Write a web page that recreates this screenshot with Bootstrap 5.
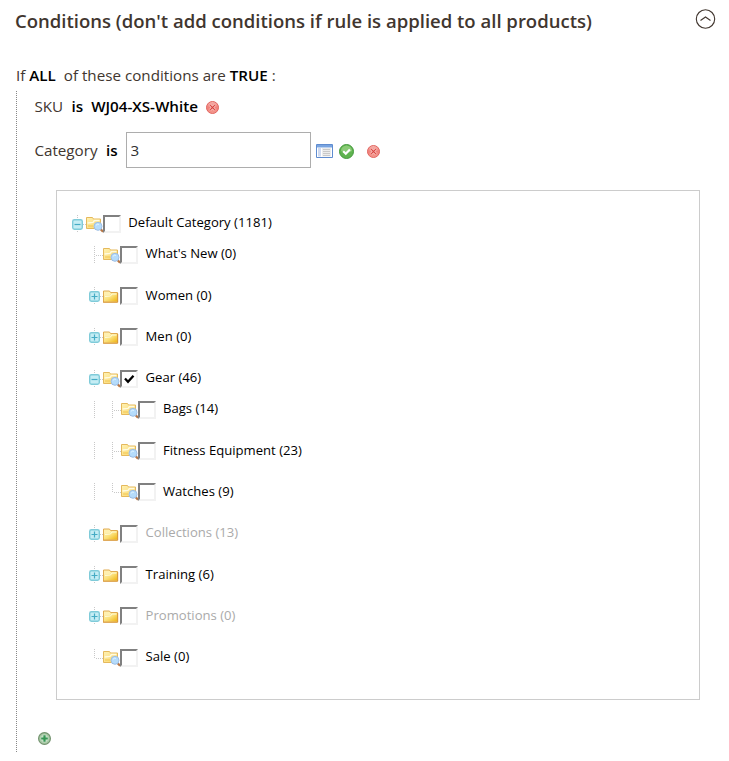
<!DOCTYPE html>
<html lang="en">
<head>
<meta charset="utf-8">
<meta name="viewport" content="width=device-width, initial-scale=1">
<title>Conditions</title>
<link href="https://cdn.jsdelivr.net/npm/bootstrap@5.3.0/dist/css/bootstrap.min.css" rel="stylesheet">
<style>
body{font-family:"Open Sans","Noto Sans",sans-serif;font-size:15.2px;line-height:20px;color:#41362f;background:#fff}
.rule-page{width:729px;height:761px;overflow:hidden}
.rule-head{height:40px;padding:0 13px 0 15px}
.rule-title{font-size:18.53px;font-weight:600;line-height:26px;color:#41362f;padding-top:1px}
.rule-intro{margin-top:25px;padding-left:16px}
.rule-tree{margin:6px 0 0 16px;height:661px;padding:5px 0 0 18px;background:repeating-linear-gradient(#888 0 1px,transparent 1px 2px) 0 0/1px 100% no-repeat}
.param{font-weight:600;color:#000}
.sku-row{height:20px;padding-left:.4px}
.sku-row svg{margin-top:2px}
.cat-row{height:36px;margin-top:16px;padding-left:.4px}
.is-word{margin-left:8.400px}
.value-box{width:185px;height:36px;padding:0 4px;border:1px solid #adadad;border-radius:0;font-size:15.2px;color:#303030;box-shadow:none}
.cat-pick{margin-left:5px}.cat-ok{margin-left:6px}.cat-del{margin-left:13px}
.cat-row svg{flex:none;margin-top:2px}
.chooser{width:644px;height:510px;margin:22px 0 0 22px;border:1px solid #ccc;padding:23.7px 0 0 12px}
.node{height:41.35px;font-size:13.1px;line-height:18px;color:#000}
.node.open{height:31px}
.node.off{color:#aaa}
.node svg{display:block;flex:none}
.node .find{margin-right:-2px}
.l1{padding-left:17.300px}.l2{padding-left:34.700px}
.l2{background:repeating-linear-gradient(#c8c8c8 0 1px,transparent 1px 2px) 25px 0/1px 18px no-repeat}
.tick{flex:none;width:18px;height:18px;border:2px solid;border-color:#808080 #f2f2f2 #f2f2f2 #808080;background:#fff}
.node-text{margin-left:7.300px;margin-top:-1.5px;white-space:nowrap}
.add-row{margin:32px 0 0 4px}
</style>
<script src="https://cdn.jsdelivr.net/npm/bootstrap@5.3.0/dist/js/bootstrap.bundle.min.js"></script>
</head>
<body>
<svg width="0" height="0" class="position-absolute" aria-hidden="true">
<defs>
<linearGradient id="gRed" x2="0" y2="1"><stop stop-color="#f6b8b2"/><stop offset=".5" stop-color="#f0827c"/><stop offset="1" stop-color="#f49a90"/></linearGradient>
<linearGradient id="gGold" x2="1" y2="1"><stop stop-color="#fdf3b8"/><stop offset=".5" stop-color="#fbe078"/><stop offset="1" stop-color="#efb514"/></linearGradient>
<linearGradient id="gPale" x2="1" y2="1"><stop stop-color="#fff2b4"/><stop offset="1" stop-color="#f8d468"/></linearGradient>
<symbol id="del" viewBox="0 0 13 13"><circle cx="6.5" cy="6.5" r="6" fill="url(#gRed)" stroke="#e0645f"/><path d="M4.2 4.2l4.6 4.6M8.8 4.2L4.2 8.8" stroke="#fbd0cb" stroke-width="2.6"/><path d="M4.2 4.2l4.6 4.6M8.8 4.2L4.2 8.8" stroke="#d8423e" stroke-width="1.2"/></symbol>
<symbol id="add" viewBox="0 0 13 13"><circle cx="6.5" cy="6.5" r="5.9" fill="#a9c9a6" stroke="#73936f" stroke-width="1.2"/><path d="M6.5 2.8v7.4M2.8 6.5h7.4" stroke="#d0e6d0" stroke-width="4"/><path d="M6.5 3.2v6.6M3.2 6.5h6.6" stroke="#369654" stroke-width="2.2"/></symbol>
<symbol id="okay" viewBox="0 0 15 15"><circle cx="7.5" cy="7.5" r="7" fill="#5fb34f" stroke="#459a3d"/><path d="M2 7a5.5 5.5 0 0 1 11 0q-5 3-11 0z" fill="#8acb76"/><path d="M4.2 7.2l2.6 2.6 4.1-4.3" fill="none" stroke="#fff" stroke-width="2.1"/></symbol>
<symbol id="grid-list" viewBox="0 0 17 14"><path d="M.5.5h16v13H.5z" fill="#fff" stroke="#5f8cd0"/><path d="M1 1h15v2.500H1z" fill="#79a4e0"/><path d="M2 4h3v8.500H2z" fill="#cfdaf0"/><path d="M6 4h9v8.500H6z" fill="#ececec"/><path d="M7 5.500h7M7 7.500h7M7 9.500h7M7 11.500h7" stroke="#c0c0c0" stroke-width=".8"/></symbol>
<symbol id="fold" viewBox="1 0 17 18"><path d="M1.500 4h6l1 1.500h7v9.500h-14z" fill="#fff0b0" stroke="#e0aa50"/><path d="M2 8.500l6-.5 1-2h6v8.500H2z" fill="url(#gGold)"/><path d="M3 9.500l5.500-.5 1.500-2h4.500" fill="none" stroke="#fffbdc"/><path d="M1 15.200h14.700V6" fill="none" stroke="#d9983a"/></symbol>
<symbol id="fold-find" viewBox="1 0 19 18"><path d="M1.500 2.500h6l1 1.500h7v9.500h-14z" fill="url(#gPale)" stroke="#e5b95c"/><path d="M2.500 8l5.500-.5 1.500-2h5" fill="none" stroke="#fffbe2" stroke-width="1.300"/><path d="M3 11h5" stroke="#f3c651"/><path d="M15.500 14l2.500 2.700" stroke="#b87848" stroke-width="2.200"/><circle cx="13" cy="11.300" r="4" fill="#b5dcfb" stroke="#9dbde3"/><path d="M10.800 10.500q1.500-2 3-1" fill="none" stroke="#e4f6ff"/></symbol>
<symbol id="box-base" viewBox="0 0 17 18"><path d="M8.500 0v18" stroke="#c8c8c8" stroke-dasharray="1 1"/><path d="M14 9.500h3" stroke="#c8c8c8" stroke-dasharray="1 1"/><rect x="3.700" y="4.700" width="9.600" height="9.600" rx="1.700" fill="#c5edf4" stroke="#7fcbd9" stroke-width="1.400"/></symbol>
<symbol id="plus" viewBox="0 0 17 18"><use href="#box-base" width="17" height="18"/><path d="M5.500 9.500h6M8.500 6.500v6" stroke="#45abc4" stroke-width="1.200"/></symbol>
<symbol id="minus" viewBox="0 0 17 18"><use href="#box-base" width="17" height="18"/><path d="M5.500 9.500h6" stroke="#45abc4" stroke-width="1.200"/></symbol>
<symbol id="elbow" viewBox="0 0 17 18"><path d="M8.500 0v18" stroke="#c8c8c8" stroke-dasharray="1 1"/><path d="M10 9.500h7" stroke="#c8c8c8" stroke-dasharray="1 1"/></symbol>
<symbol id="elbow-end" viewBox="0 0 17 18"><path d="M8.500 0v10" stroke="#c8c8c8" stroke-dasharray="1 1"/><path d="M10 9.500h7" stroke="#c8c8c8" stroke-dasharray="1 1"/></symbol>
</defs>
</svg>
<main class="rule-page">
<header class="rule-head d-flex justify-content-between align-items-center">
<h1 class="rule-title m-0">Conditions (don't add conditions if rule is applied to all products)</h1>
<svg class="mb-1" width="21" height="21" viewBox="0 -.5 21 21" fill="none" stroke="#41362f"><circle cx="10.500" cy="10.500" r="9.200" stroke-width="1.100"/><path d="M5.500 12l5-3.500 5 3.500" stroke-width="1.100"/></svg>
</header>
<div class="rule-intro">If <span class="param">ALL</span>&nbsp; of these conditions are <span class="param">TRUE</span> :</div>
<section class="rule-tree">
<div class="sku-row d-flex align-items-center"><span>SKU</span><span class="param is-word">is</span><span class="param ms-2">WJ04-XS-White</span><svg class="ms-2" width="13" height="13"><use href="#del"/></svg></div>
<div class="cat-row d-flex align-items-center"><span>Category</span><span class="param is-word">is</span><input class="form-control value-box ms-2" value="3" aria-label="Category"><svg class="cat-pick" width="17" height="14"><use href="#grid-list"/></svg><svg class="cat-ok" width="15" height="15"><use href="#okay"/></svg><svg class="cat-del" width="13" height="13"><use href="#del"/></svg></div>
<div class="chooser">
<div class="node open d-flex"><svg width="17" height="18"><use href="#minus"/></svg><svg class="find" width="19" height="18"><use href="#fold-find"/></svg><span class="tick"></span><span class="node-text">Default Category (1181)</span></div>
<div class="node l1 d-flex"><svg width="17" height="18"><use href="#elbow"/></svg><svg class="find" width="19" height="18"><use href="#fold-find"/></svg><span class="tick"></span><span class="node-text">What's New (0)</span></div>
<div class="node l1 d-flex"><svg width="17" height="18"><use href="#plus"/></svg><svg width="17" height="18"><use href="#fold"/></svg><span class="tick"></span><span class="node-text">Women (0)</span></div>
<div class="node l1 d-flex"><svg width="17" height="18"><use href="#plus"/></svg><svg width="17" height="18"><use href="#fold"/></svg><span class="tick"></span><span class="node-text">Men (0)</span></div>
<div class="node open l1 d-flex"><svg width="17" height="18"><use href="#minus"/></svg><svg class="find" width="19" height="18"><use href="#fold-find"/></svg><span class="tick"><svg width="14" height="14" viewBox="0 0 14 14"><path d="M3 6.500l3 3.200 5.500-6" fill="none" stroke="#000" stroke-width="2.300"/></svg></span><span class="node-text">Gear (46)</span></div>
<div class="node l2 d-flex"><svg width="17" height="18"><use href="#elbow"/></svg><svg class="find" width="19" height="18"><use href="#fold-find"/></svg><span class="tick"></span><span class="node-text">Bags (14)</span></div>
<div class="node l2 d-flex"><svg width="17" height="18"><use href="#elbow"/></svg><svg class="find" width="19" height="18"><use href="#fold-find"/></svg><span class="tick"></span><span class="node-text">Fitness Equipment (23)</span></div>
<div class="node l2 d-flex"><svg width="17" height="18"><use href="#elbow-end"/></svg><svg class="find" width="19" height="18"><use href="#fold-find"/></svg><span class="tick"></span><span class="node-text">Watches (9)</span></div>
<div class="node off l1 d-flex"><svg width="17" height="18"><use href="#plus"/></svg><svg width="17" height="18"><use href="#fold"/></svg><span class="tick"></span><span class="node-text">Collections (13)</span></div>
<div class="node l1 d-flex"><svg width="17" height="18"><use href="#plus"/></svg><svg width="17" height="18"><use href="#fold"/></svg><span class="tick"></span><span class="node-text">Training (6)</span></div>
<div class="node off l1 d-flex"><svg width="17" height="18"><use href="#plus"/></svg><svg width="17" height="18"><use href="#fold"/></svg><span class="tick"></span><span class="node-text">Promotions (0)</span></div>
<div class="node l1 d-flex"><svg width="17" height="18"><use href="#elbow-end"/></svg><svg class="find" width="19" height="18"><use href="#fold-find"/></svg><span class="tick"></span><span class="node-text">Sale (0)</span></div>
</div>
<div class="add-row"><svg class="d-block" width="13" height="13"><use href="#add"/></svg></div>
</section>
</main>
</body>
</html>
